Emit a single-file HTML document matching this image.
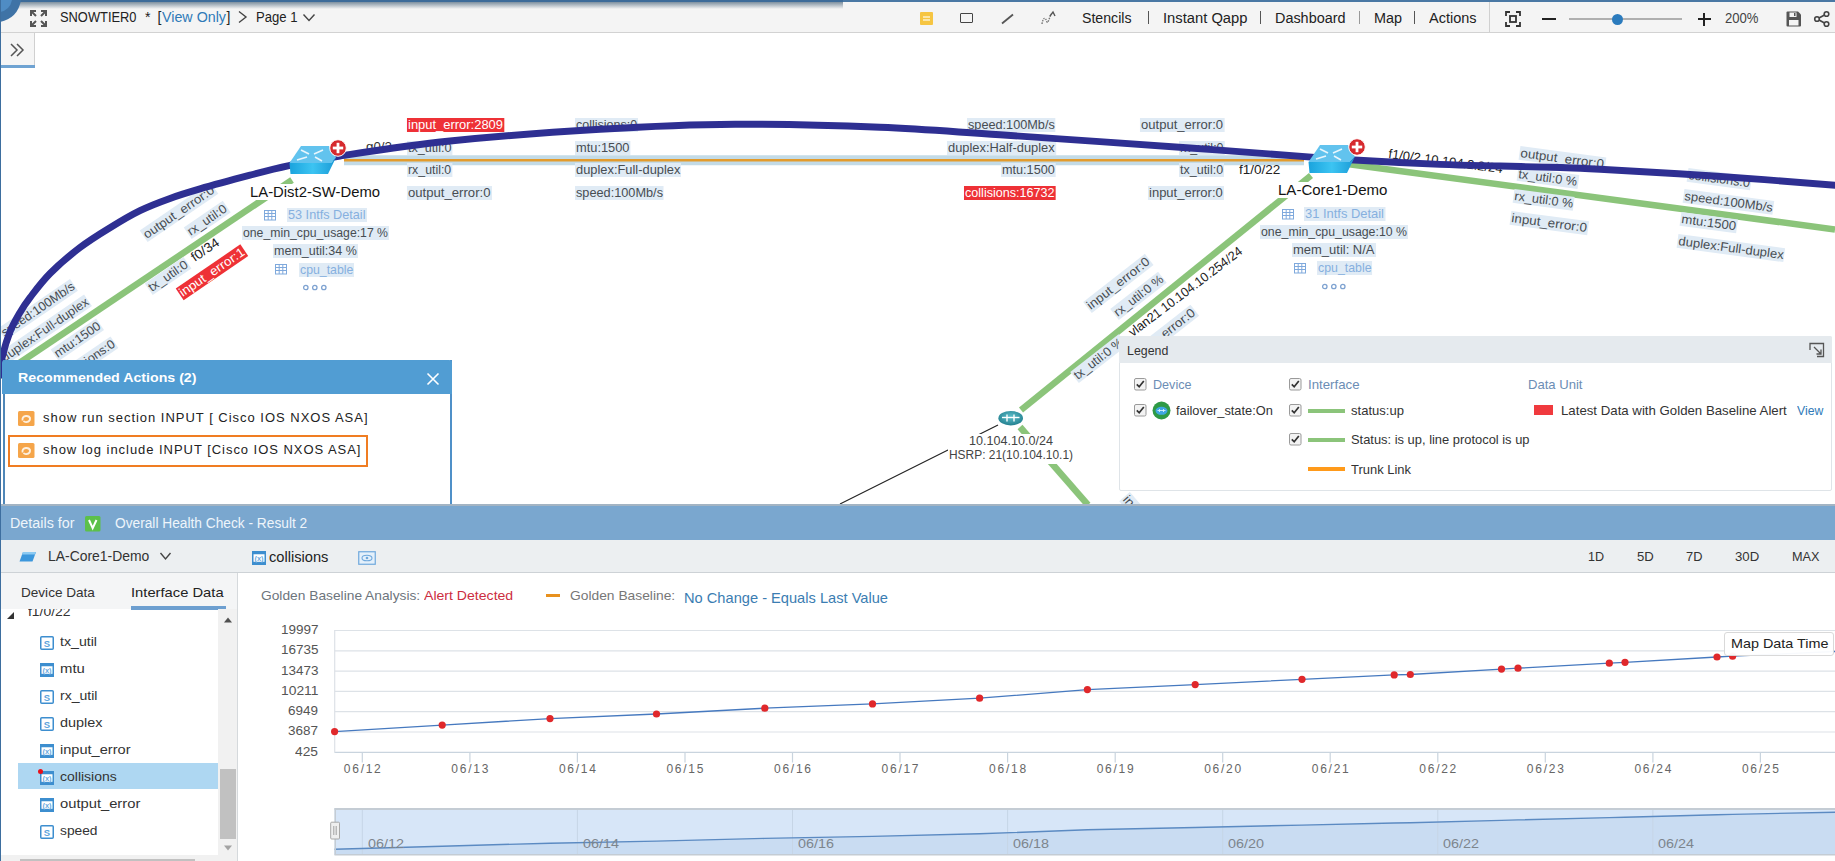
<!DOCTYPE html>
<html><head><meta charset="utf-8"><style>
html,body{margin:0;padding:0;width:1835px;height:861px;overflow:hidden;background:#fff;font-family:"Liberation Sans",sans-serif;position:relative}
.t{position:absolute;white-space:nowrap;z-index:5}
.a{position:absolute}
svg{position:absolute;left:0;top:0}
</style></head><body>
<div class="a" style="left:0;top:0;width:1835px;height:32px;background:#f4f4f4;border-bottom:1px solid #d2d2d2"></div>
<div class="a" style="left:843px;top:0;width:992px;height:1.7px;background:#4a78a4"></div>
<div class="a" style="left:0;top:0;width:843px;height:2.2px;background:#3d6b99"></div>
<div class="a" style="left:0;top:2.2px;width:843px;height:7px;background:linear-gradient(#7d8f9f,rgba(244,244,244,0))"></div>
<svg width="40" height="40" style="left:0;top:0"><path d="M0 0 H21 Q18 18 0 22 Z" fill="#3f73a6"/><path d="M0 0 H12 Q10 10 0 12 Z" fill="#4f8cc4"/></svg>
<div class="a" style="left:0;top:0;width:1px;height:861px;background:#3d6e9f;z-index:50"></div>
<svg width="20" height="20" style="left:29px;top:9px"><g stroke="#555" stroke-width="2" fill="none">
<path d="M2 7V2H7M2 2L7 7"/><path d="M17 7V2H12M17 2L12 7"/><path d="M2 12V17H7M2 17L7 12"/><path d="M17 12V17H12M17 17L12 12"/></g></svg>
<svg width="12" height="14" style="left:237px;top:10px"><path d="M2 1.5L9 7L2 12.5" stroke="#444" stroke-width="1.4" fill="none"/></svg>
<svg width="14" height="10" style="left:302px;top:13px"><path d="M1.5 1.5L7 7.5L12.5 1.5" stroke="#444" stroke-width="1.4" fill="none"/></svg>
<div class="a" style="left:920px;top:12px;width:13px;height:13px;background:#f6c542;border-radius:1px"></div>
<div class="a" style="left:923px;top:16px;width:7px;height:1.5px;background:#fbe6a8"></div><div class="a" style="left:923px;top:19px;width:7px;height:1.5px;background:#fbe6a8"></div>
<div class="a" style="left:960px;top:13px;width:11px;height:8px;border:1.6px solid #444;border-radius:1px"></div>
<svg width="16" height="14" style="left:1000px;top:12px"><path d="M2 11.5L13 2.5" stroke="#555" stroke-width="1.8"/></svg>
<svg width="18" height="16" style="left:1040px;top:10px"><path d="M2 14C3 8 5 6 7 12C8 14 10 6 11 4" stroke="#777" stroke-width="1.4" fill="none" stroke-dasharray="1.5 1"/><path d="M10 6L13 2L15 6" stroke="#555" stroke-width="1.4" fill="none"/></svg>
<div class="a" style="left:1148px;top:11px;width:1px;height:13px;background:#555"></div>
<div class="a" style="left:1260px;top:11px;width:1px;height:13px;background:#555"></div>
<div class="a" style="left:1359px;top:11px;width:1px;height:13px;background:#999"></div>
<div class="a" style="left:1414px;top:11px;width:1px;height:13px;background:#555"></div>
<div class="a" style="left:1489px;top:2px;width:1px;height:30px;background:#d0d0d0"></div>
<svg width="18" height="18" style="left:1504px;top:10px"><g stroke="#333" stroke-width="1.8" fill="none">
<path d="M2 6V2H6"/><path d="M12 2H16V6"/><path d="M2 12V16H6"/><path d="M12 16H16V12"/><rect x="6" y="6" width="6" height="6"/></g></svg>
<div class="a" style="left:1542px;top:18px;width:14px;height:2.2px;background:#222"></div>
<div class="a" style="left:1569px;top:18px;width:113px;height:2px;background:#b0b0b0"></div>
<div class="a" style="left:1611.5px;top:13.5px;width:11px;height:11px;border-radius:50%;background:#2b7bbd"></div>
<div class="a" style="left:1697.5px;top:18px;width:13.5px;height:2.4px;background:#222"></div><div class="a" style="left:1703px;top:12.5px;width:2.4px;height:13.5px;background:#222"></div>
<svg width="18" height="18" style="left:1785px;top:10px"><path d="M1.5 2.5Q1.5 1.5 2.5 1.5H13L16 4.5V15.5Q16 16.5 15 16.5H2.5Q1.5 16.5 1.5 15.5Z" fill="#555"/>
<rect x="4.5" y="2.5" width="7" height="4.5" fill="#f4f4f4"/><rect x="9" y="3" width="1.5" height="3" fill="#555"/><rect x="4" y="10" width="9.5" height="5.5" fill="#f4f4f4"/></svg>
<svg width="18" height="18" style="left:1813px;top:10px"><g stroke="#444" stroke-width="1.6" fill="none"><circle cx="13.5" cy="4" r="2.3"/><circle cx="4" cy="9" r="2.3"/><circle cx="13.5" cy="14" r="2.3"/><path d="M6 8L11.5 5M6 10L11.5 13"/></g></svg>
<div class="a" style="left:0;top:33px;width:34px;height:32px;background:#f5f5f5;border-right:1px solid #d0d0d0"></div>
<div class="a" style="left:0;top:65px;width:35px;height:3px;background:#6fa3d2"></div>
<svg width="20" height="16" style="left:9px;top:42px"><path d="M2 2L8 8L2 14M8 2L14 8L8 14" stroke="#555" stroke-width="1.5" fill="none"/></svg>
<svg width="1835" height="505" style="z-index:2">
<line x1="0" y1="376" x2="292" y2="180" stroke="#8bc47a" stroke-width="6.5"/>
<line x1="1311" y1="175.5" x2="1021" y2="410" stroke="#8bc47a" stroke-width="6.5"/>
<line x1="1020" y1="427" x2="1088" y2="505" stroke="#8bc47a" stroke-width="6.5"/>
<line x1="1340" y1="163" x2="1835" y2="229.5" stroke="#8bc47a" stroke-width="6.5"/>
<line x1="344" y1="160.2" x2="1304" y2="160.2" stroke="#c3dbe7" stroke-width="10"/>
<line x1="344" y1="160.2" x2="1304" y2="160.2" stroke="#e39b2c" stroke-width="2.5"/>
<line x1="998" y1="425" x2="840" y2="504" stroke="#222" stroke-width="1.2"/>
</svg>
<svg width="1835" height="505" style="z-index:8"><path d="M-1.0 378.0 C-0.5 374.7 0.2 365.7 2.0 358.0 C3.8 350.3 7.0 339.4 10.0 331.8 C13.0 324.2 16.7 318.2 20.0 312.5 C23.3 306.8 25.0 304.1 30.0 297.6 C35.0 291.1 41.7 281.9 50.0 273.5 C58.3 265.1 70.0 255.1 80.0 247.5 C90.0 239.9 100.0 233.8 110.0 227.7 C120.0 221.5 130.0 215.5 140.0 210.6 C150.0 205.7 160.0 202.0 170.0 198.4 C180.0 194.8 186.7 192.8 200.0 188.9 C213.3 185.0 235.2 179.1 250.0 175.2 C264.8 171.3 274.0 168.8 289.0 165.6 C304.0 162.4 313.2 160.1 340.0 156.0 C366.8 151.9 406.7 145.4 450.0 141.0 C493.3 136.6 552.5 132.1 600.0 129.3 C647.5 126.5 688.3 124.6 735.0 124.3 C781.7 124.0 835.8 125.5 880.0 127.3 C924.2 129.1 948.3 131.4 1000.0 134.8 C1051.7 138.2 1134.8 144.0 1190.0 148.0 C1245.2 152.0 1307.5 156.8 1331.0 158.6 M1331.0 158.6 C1334.2 158.8 1331.8 158.8 1350.0 159.8 C1368.2 160.8 1415.0 163.4 1440.0 164.4 C1465.0 165.4 1480.0 165.5 1500.0 166.0 C1520.0 166.5 1543.3 167.0 1560.0 167.5 C1576.7 168.0 1573.8 167.8 1600.0 169.2 C1626.2 170.6 1677.0 173.5 1717.0 176.2 C1757.0 178.9 1819.5 184.0 1840.0 185.6" stroke="#2e2f92" stroke-width="6.9" fill="none"/></svg>
<svg width="60" height="40" style="left:289.0px;top:145.0px;z-index:9">
<defs><linearGradient id="sf289" x1="0" y1="0" x2="1" y2="0"><stop offset="0" stop-color="#1aa3dd"/><stop offset="0.5" stop-color="#3cc4f2"/><stop offset="1" stop-color="#1a9ad6"/></linearGradient></defs>
<path d="M12 1H40L47 12.5L42 18H0.5Z" fill="#62c3ee"/>
<path d="M0.5 18H42L47 12.5L39 29H1.5Z" fill="url(#sf289)"/>
<g stroke="#e8f6fd" stroke-width="1.6" fill="none"><path d="M12 5L20 9"/><path d="M25 9L34 5"/><path d="M8 15L18 12"/><path d="M26 12L33 16"/></g>
</svg>
<svg width="20" height="20" style="left:328.0px;top:138.0px;z-index:10"><circle cx="10" cy="10" r="8.3" fill="#d62a2e" stroke="#fff" stroke-width="1"/>
<rect x="8.6" y="4.8" width="2.8" height="10.4" fill="#fff"/><rect x="4.8" y="8.6" width="10.4" height="2.8" fill="#fff"/></svg>
<svg width="60" height="40" style="left:1308.0px;top:144.0px;z-index:9">
<defs><linearGradient id="sf1308" x1="0" y1="0" x2="1" y2="0"><stop offset="0" stop-color="#1aa3dd"/><stop offset="0.5" stop-color="#3cc4f2"/><stop offset="1" stop-color="#1a9ad6"/></linearGradient></defs>
<path d="M12 1H40L47 12.5L42 18H0.5Z" fill="#62c3ee"/>
<path d="M0.5 18H42L47 12.5L39 29H1.5Z" fill="url(#sf1308)"/>
<g stroke="#e8f6fd" stroke-width="1.6" fill="none"><path d="M12 5L20 9"/><path d="M25 9L34 5"/><path d="M8 15L18 12"/><path d="M26 12L33 16"/></g>
</svg>
<svg width="20" height="20" style="left:1347.0px;top:137.0px;z-index:10"><circle cx="10" cy="10" r="8.3" fill="#d62a2e" stroke="#fff" stroke-width="1"/>
<rect x="8.6" y="4.8" width="2.8" height="10.4" fill="#fff"/><rect x="4.8" y="8.6" width="10.4" height="2.8" fill="#fff"/></svg>
<svg width="13" height="11" style="left:263.5px;top:210.0px;z-index:6"><g fill="none" stroke="#7fa9dc" stroke-width="1"><rect x="0.5" y="0.5" width="11" height="9.5"/><path d="M0.5 3.5H11.5M0.5 6.5H11.5M4.2 0.5V10M7.8 0.5V10"/></g></svg>
<svg width="13" height="11" style="left:275.0px;top:264.0px;z-index:6"><g fill="none" stroke="#7fa9dc" stroke-width="1"><rect x="0.5" y="0.5" width="11" height="9.5"/><path d="M0.5 3.5H11.5M0.5 6.5H11.5M4.2 0.5V10M7.8 0.5V10"/></g></svg>
<svg width="24" height="8" style="left:302.5px;top:284.0px;z-index:6"><g fill="none" stroke="#7fa3d1" stroke-width="1.3"><circle cx="2.8" cy="3.5" r="2.2"/><circle cx="11.8" cy="3.5" r="2.2"/><circle cx="20.8" cy="3.5" r="2.2"/></g></svg>
<svg width="13" height="11" style="left:1282.0px;top:208.5px;z-index:6"><g fill="none" stroke="#7fa9dc" stroke-width="1"><rect x="0.5" y="0.5" width="11" height="9.5"/><path d="M0.5 3.5H11.5M0.5 6.5H11.5M4.2 0.5V10M7.8 0.5V10"/></g></svg>
<svg width="13" height="11" style="left:1294.0px;top:262.5px;z-index:6"><g fill="none" stroke="#7fa9dc" stroke-width="1"><rect x="0.5" y="0.5" width="11" height="9.5"/><path d="M0.5 3.5H11.5M0.5 6.5H11.5M4.2 0.5V10M7.8 0.5V10"/></g></svg>
<svg width="24" height="8" style="left:1321.5px;top:282.5px;z-index:6"><g fill="none" stroke="#7fa3d1" stroke-width="1.3"><circle cx="2.8" cy="3.5" r="2.2"/><circle cx="11.8" cy="3.5" r="2.2"/><circle cx="20.8" cy="3.5" r="2.2"/></g></svg>
<svg width="30" height="20" style="left:996px;top:408px;z-index:9"><defs><radialGradient id="rg" cx="0.5" cy="0.4" r="0.6"><stop offset="0" stop-color="#5fc0cc"/><stop offset="1" stop-color="#23808f"/></radialGradient></defs>
<ellipse cx="14.7" cy="10.2" rx="12.3" ry="7.2" fill="url(#rg)"/>
<g stroke="#fff" stroke-width="1.4" fill="none"><path d="M6 9.5H23.5"/><path d="M11 6.5V13.5"/><path d="M18 6.5V13.5"/></g></svg>
<div class="a" style="left:948px;top:434px;width:126px;height:29.5px;background:#fff;z-index:6"></div>
<div class="a" style="left:2.5px;top:360px;width:449.5px;height:144px;background:#fff;z-index:20;box-sizing:border-box;border-left:2px solid #4f87b8;border-right:2px solid #4f90c8"></div>
<div class="a" style="left:2px;top:360px;width:450px;height:34px;background:#519dd3;z-index:21;border-radius:3px 3px 0 0"></div>
<svg width="16" height="16" style="left:425px;top:371px;z-index:22"><path d="M2.5 2.5L13.5 13.5M13.5 2.5L2.5 13.5" stroke="#fff" stroke-width="1.6"/></svg>
<svg width="17" height="16" style="left:18.0px;top:411.0px;z-index:22"><rect x="0" y="0" width="16.5" height="15" rx="1.5" fill="#f5a54a"/>
<path d="M4.5 9.5Q4 5.5 8 5Q11.5 4.8 12 7.5" stroke="#fdf0e0" stroke-width="1.8" fill="none"/><path d="M12 6.5Q12.5 10.5 8.5 11Q6.5 11.2 5.5 10" stroke="#fdf0e0" stroke-width="1.8" fill="none"/></svg>
<div class="a" style="left:8px;top:435px;width:360px;height:32px;box-sizing:border-box;border:2px solid #f07d22;z-index:22"></div>
<svg width="17" height="16" style="left:18.0px;top:442.5px;z-index:22"><rect x="0" y="0" width="16.5" height="15" rx="1.5" fill="#f5a54a"/>
<path d="M4.5 9.5Q4 5.5 8 5Q11.5 4.8 12 7.5" stroke="#fdf0e0" stroke-width="1.8" fill="none"/><path d="M12 6.5Q12.5 10.5 8.5 11Q6.5 11.2 5.5 10" stroke="#fdf0e0" stroke-width="1.8" fill="none"/></svg>
<div class="a" style="left:1119px;top:336px;width:713px;height:155px;background:#fff;border:1px solid #dfe4e8;box-sizing:border-box;z-index:20;border-radius:2px"></div>
<div class="a" style="left:1119px;top:336px;width:713px;height:27px;background:#e5eaee;z-index:21;border-radius:2px 2px 0 0"></div>
<svg width="18" height="18" style="left:1808px;top:341px;z-index:22"><g stroke="#555" stroke-width="1.3" fill="none"><path d="M2 9V2.5H15.5V15.5H9"/><path d="M6 6L13 13M13 8.5V13H8.5"/></g></svg>
<svg width="13" height="13" style="left:1133.5px;top:377.5px;z-index:22"><rect x="0.5" y="0.5" width="11.5" height="11.5" rx="1.5" fill="#f3f3f3" stroke="#9a9a9a"/><path d="M2.8 6.3L5.2 8.8L9.8 3" stroke="#333" stroke-width="1.7" fill="none"/></svg>
<svg width="13" height="13" style="left:1288.5px;top:377.5px;z-index:22"><rect x="0.5" y="0.5" width="11.5" height="11.5" rx="1.5" fill="#f3f3f3" stroke="#9a9a9a"/><path d="M2.8 6.3L5.2 8.8L9.8 3" stroke="#333" stroke-width="1.7" fill="none"/></svg>
<svg width="13" height="13" style="left:1133.5px;top:404.0px;z-index:22"><rect x="0.5" y="0.5" width="11.5" height="11.5" rx="1.5" fill="#f3f3f3" stroke="#9a9a9a"/><path d="M2.8 6.3L5.2 8.8L9.8 3" stroke="#333" stroke-width="1.7" fill="none"/></svg>
<svg width="20" height="20" style="left:1152px;top:400.5px;z-index:22"><circle cx="9.5" cy="9.5" r="9" fill="#2e9a45"/><ellipse cx="9.5" cy="9.8" rx="6" ry="4" fill="#3ea7e0"/><path d="M5.5 9.5H13.5M7.5 8V11M11.5 8V11" stroke="#d9f1fb" stroke-width="0.9"/></svg>
<svg width="13" height="13" style="left:1288.5px;top:404.0px;z-index:22"><rect x="0.5" y="0.5" width="11.5" height="11.5" rx="1.5" fill="#f3f3f3" stroke="#9a9a9a"/><path d="M2.8 6.3L5.2 8.8L9.8 3" stroke="#333" stroke-width="1.7" fill="none"/></svg>
<div class="a" style="left:1307.5px;top:408.5px;width:37.5px;height:4.5px;background:#8bc47a;z-index:22"></div>
<svg width="13" height="13" style="left:1288.5px;top:433.0px;z-index:22"><rect x="0.5" y="0.5" width="11.5" height="11.5" rx="1.5" fill="#f3f3f3" stroke="#9a9a9a"/><path d="M2.8 6.3L5.2 8.8L9.8 3" stroke="#333" stroke-width="1.7" fill="none"/></svg>
<div class="a" style="left:1307.5px;top:437.5px;width:37.5px;height:4.5px;background:#8bc47a;z-index:22"></div>
<div class="a" style="left:1307.5px;top:467px;width:37.5px;height:3.5px;background:#ff9a1a;z-index:22"></div>
<div class="a" style="left:1534px;top:405px;width:18.5px;height:10px;background:#f03a3e;z-index:22"></div>
<div class="a" style="left:0;top:504px;width:1835px;height:2px;background:#a3b4c3;z-index:30"></div>
<div class="a" style="left:0;top:506px;width:1835px;height:34px;background:#7aa7cf;z-index:30"></div>
<svg width="16" height="16" style="left:85px;top:516px;z-index:31"><rect x="0" y="0" width="15.5" height="15.5" rx="1.5" fill="#5cc04a"/><path d="M4 4L7.7 12.2L11.5 4" stroke="#fff" stroke-width="2" fill="none"/></svg>
<div class="a" style="left:0;top:540px;width:1835px;height:32px;background:#eceff1;border-bottom:1px solid #cdd2d6;z-index:30"></div>
<svg width="18" height="12" style="left:19px;top:550.5px;z-index:31"><path d="M4 1H17L13.5 10.5H0.5Z" fill="#3c97dc"/><path d="M4 1H17L16 3.5H3Z" fill="#8ccaf2"/></svg>
<svg width="14" height="10" style="left:159px;top:551px;z-index:31"><path d="M1.5 2L6.5 8L11.5 2" stroke="#444" stroke-width="1.4" fill="none"/></svg>
<svg width="15" height="15" style="left:252.0px;top:551.0px;z-index:31"><rect x="0.75" y="0.75" width="12.5" height="12.5" fill="#fff" stroke="#3d8ecf" stroke-width="1.5"/><rect x="0.75" y="0.75" width="12.5" height="2.5" fill="#3d8ecf"/><rect x="0.75" y="10.8" width="12.5" height="2.5" fill="#3d8ecf"/><text x="7" y="10" font-size="7.5" font-family="Liberation Sans" fill="#6aa9dd" text-anchor="middle" font-weight="bold">(x)</text></svg>
<svg width="19" height="15" style="left:357.5px;top:551px;z-index:31"><rect x="0.75" y="0.75" width="16.5" height="12.5" fill="#e4f0fb" stroke="#6fa8dc" stroke-width="1.2"/><ellipse cx="9" cy="7" rx="5" ry="2.8" fill="none" stroke="#6fa8dc" stroke-width="1.1"/><circle cx="9" cy="7" r="1.3" fill="#6fa8dc"/></svg>
<div class="a" style="left:0;top:573px;width:237px;height:36px;background:#f4f5f6;z-index:30"></div>
<div class="a" style="left:237px;top:573px;width:1px;height:288px;background:#d5d9dc;z-index:30"></div>
<div class="a" style="left:131px;top:606px;width:95px;height:3.5px;background:#6d9fd0;z-index:31"></div>
<div class="a" style="left:0;top:609px;width:237px;height:252px;background:#fff;z-index:29"></div>
<div class="a" style="left:0;top:609px;width:218px;height:20px;overflow:hidden;z-index:31"><svg width="10" height="10" style="left:5.5px;top:2px"><path d="M8 1V8H1Z" fill="#333"/></svg><span class="t" style="left:27.6px;top:-3.6px;font-size:13px;line-height:14px;color:#333;transform:scaleX(1.07);transform-origin:0 0">f1/0/22</span></div>
<div class="a" style="left:18px;top:763.2px;width:200.5px;height:26.3px;background:#aed7f2;z-index:30"></div>
<svg width="15" height="15" style="left:40.0px;top:636.0px;z-index:31"><rect x="0.75" y="0.75" width="12.5" height="12.5" rx="1" fill="#fff" stroke="#3d8ecf" stroke-width="1.5"/><text x="7" y="10.8" font-size="9.5" font-family="Liberation Sans" fill="#5ca3dc" text-anchor="middle" font-weight="bold">S</text></svg>
<svg width="15" height="15" style="left:40.0px;top:663.0px;z-index:31"><rect x="0.75" y="0.75" width="12.5" height="12.5" fill="#fff" stroke="#3d8ecf" stroke-width="1.5"/><rect x="0.75" y="0.75" width="12.5" height="2.5" fill="#3d8ecf"/><rect x="0.75" y="10.8" width="12.5" height="2.5" fill="#3d8ecf"/><text x="7" y="10" font-size="7.5" font-family="Liberation Sans" fill="#6aa9dd" text-anchor="middle" font-weight="bold">(x)</text></svg>
<svg width="15" height="15" style="left:40.0px;top:690.0px;z-index:31"><rect x="0.75" y="0.75" width="12.5" height="12.5" rx="1" fill="#fff" stroke="#3d8ecf" stroke-width="1.5"/><text x="7" y="10.8" font-size="9.5" font-family="Liberation Sans" fill="#5ca3dc" text-anchor="middle" font-weight="bold">S</text></svg>
<svg width="15" height="15" style="left:40.0px;top:717.0px;z-index:31"><rect x="0.75" y="0.75" width="12.5" height="12.5" rx="1" fill="#fff" stroke="#3d8ecf" stroke-width="1.5"/><text x="7" y="10.8" font-size="9.5" font-family="Liberation Sans" fill="#5ca3dc" text-anchor="middle" font-weight="bold">S</text></svg>
<svg width="15" height="15" style="left:40.0px;top:744.0px;z-index:31"><rect x="0.75" y="0.75" width="12.5" height="12.5" fill="#fff" stroke="#3d8ecf" stroke-width="1.5"/><rect x="0.75" y="0.75" width="12.5" height="2.5" fill="#3d8ecf"/><rect x="0.75" y="10.8" width="12.5" height="2.5" fill="#3d8ecf"/><text x="7" y="10" font-size="7.5" font-family="Liberation Sans" fill="#6aa9dd" text-anchor="middle" font-weight="bold">(x)</text></svg>
<svg width="15" height="15" style="left:40.0px;top:771.0px;z-index:31"><rect x="0.75" y="0.75" width="12.5" height="12.5" fill="#fff" stroke="#3d8ecf" stroke-width="1.5"/><rect x="0.75" y="0.75" width="12.5" height="2.5" fill="#3d8ecf"/><rect x="0.75" y="10.8" width="12.5" height="2.5" fill="#3d8ecf"/><text x="7" y="10" font-size="7.5" font-family="Liberation Sans" fill="#6aa9dd" text-anchor="middle" font-weight="bold">(x)</text></svg>
<svg width="15" height="15" style="left:40.0px;top:798.0px;z-index:31"><rect x="0.75" y="0.75" width="12.5" height="12.5" fill="#fff" stroke="#3d8ecf" stroke-width="1.5"/><rect x="0.75" y="0.75" width="12.5" height="2.5" fill="#3d8ecf"/><rect x="0.75" y="10.8" width="12.5" height="2.5" fill="#3d8ecf"/><text x="7" y="10" font-size="7.5" font-family="Liberation Sans" fill="#6aa9dd" text-anchor="middle" font-weight="bold">(x)</text></svg>
<svg width="15" height="15" style="left:40.0px;top:825.0px;z-index:31"><rect x="0.75" y="0.75" width="12.5" height="12.5" rx="1" fill="#fff" stroke="#3d8ecf" stroke-width="1.5"/><text x="7" y="10.8" font-size="9.5" font-family="Liberation Sans" fill="#5ca3dc" text-anchor="middle" font-weight="bold">S</text></svg>
<div class="a" style="left:38px;top:769px;width:5px;height:5px;border-radius:50%;background:#e8101a;z-index:33"></div>
<div class="a" style="left:218px;top:609px;width:19px;height:246px;background:#f1f1f1;z-index:31"></div>
<svg width="10" height="8" style="left:223px;top:616px;z-index:32"><path d="M1 6.5L5 1.5L9 6.5Z" fill="#505050"/></svg>
<div class="a" style="left:220px;top:768.8px;width:16px;height:70px;background:#c1c1c1;z-index:32"></div>
<svg width="10" height="8" style="left:223px;top:844px;z-index:32"><path d="M1 1.5L5 6.5L9 1.5Z" fill="#a3a3a3"/></svg>
<div class="a" style="left:0;top:855px;width:237px;height:6px;background:#f1f1f1;z-index:31"></div>
<div class="a" style="left:19.7px;top:858.5px;width:175px;height:3px;background:#c1c1c1;z-index:32"></div>
<div class="a" style="left:546px;top:593.5px;width:13.5px;height:3.5px;background:#e8911e;z-index:31"></div>
<svg width="1835" height="861" style="z-index:31">
<line x1="334.5" y1="630.5" x2="1835" y2="630.5" stroke="#dde2e7" stroke-width="1.2"/>
<line x1="334.5" y1="650.8" x2="1835" y2="650.8" stroke="#dde2e7" stroke-width="1.2"/>
<line x1="334.5" y1="671.1" x2="1835" y2="671.1" stroke="#dde2e7" stroke-width="1.2"/>
<line x1="334.5" y1="691.4" x2="1835" y2="691.4" stroke="#dde2e7" stroke-width="1.2"/>
<line x1="334.5" y1="711.7" x2="1835" y2="711.7" stroke="#dde2e7" stroke-width="1.2"/>
<line x1="334.5" y1="732.0" x2="1835" y2="732.0" stroke="#dde2e7" stroke-width="1.2"/>
<line x1="334.5" y1="752.3" x2="1835" y2="752.3" stroke="#c9d4de" stroke-width="1.3"/>
<line x1="334.7" y1="630" x2="334.7" y2="752.5" stroke="#dde2e7" stroke-width="1.2"/>
<line x1="362.3" y1="752.3" x2="362.3" y2="762.5" stroke="#c9d4de" stroke-width="1.2"/>
<line x1="469.9" y1="752.3" x2="469.9" y2="762.5" stroke="#c9d4de" stroke-width="1.2"/>
<line x1="577.4" y1="752.3" x2="577.4" y2="762.5" stroke="#c9d4de" stroke-width="1.2"/>
<line x1="685.0" y1="752.3" x2="685.0" y2="762.5" stroke="#c9d4de" stroke-width="1.2"/>
<line x1="792.5" y1="752.3" x2="792.5" y2="762.5" stroke="#c9d4de" stroke-width="1.2"/>
<line x1="900.0" y1="752.3" x2="900.0" y2="762.5" stroke="#c9d4de" stroke-width="1.2"/>
<line x1="1007.6" y1="752.3" x2="1007.6" y2="762.5" stroke="#c9d4de" stroke-width="1.2"/>
<line x1="1115.2" y1="752.3" x2="1115.2" y2="762.5" stroke="#c9d4de" stroke-width="1.2"/>
<line x1="1222.7" y1="752.3" x2="1222.7" y2="762.5" stroke="#c9d4de" stroke-width="1.2"/>
<line x1="1330.2" y1="752.3" x2="1330.2" y2="762.5" stroke="#c9d4de" stroke-width="1.2"/>
<line x1="1437.8" y1="752.3" x2="1437.8" y2="762.5" stroke="#c9d4de" stroke-width="1.2"/>
<line x1="1545.3" y1="752.3" x2="1545.3" y2="762.5" stroke="#c9d4de" stroke-width="1.2"/>
<line x1="1652.9" y1="752.3" x2="1652.9" y2="762.5" stroke="#c9d4de" stroke-width="1.2"/>
<line x1="1760.4" y1="752.3" x2="1760.4" y2="762.5" stroke="#c9d4de" stroke-width="1.2"/>
<polyline points="334.6,731.6 442.2,725.1 550.0,718.6 656.5,714.0 764.8,708.2 872.5,703.9 979.6,698.2 1087.4,689.6 1195.2,684.6 1302.0,679.3 1394.2,674.9 1410.3,674.5 1501.5,669.1 1518.0,668.2 1609.3,663.2 1625.0,662.3 1717.0,657.0 1732.6,656.2 1835.0,651.5" fill="none" stroke="#4679bf" stroke-width="1.3"/>
<circle cx="334.6" cy="731.6" r="3.6" fill="#e0282b"/>
<circle cx="442.2" cy="725.1" r="3.6" fill="#e0282b"/>
<circle cx="550.0" cy="718.6" r="3.6" fill="#e0282b"/>
<circle cx="656.5" cy="714.0" r="3.6" fill="#e0282b"/>
<circle cx="764.8" cy="708.2" r="3.6" fill="#e0282b"/>
<circle cx="872.5" cy="703.9" r="3.6" fill="#e0282b"/>
<circle cx="979.6" cy="698.2" r="3.6" fill="#e0282b"/>
<circle cx="1087.4" cy="689.6" r="3.6" fill="#e0282b"/>
<circle cx="1195.2" cy="684.6" r="3.6" fill="#e0282b"/>
<circle cx="1302.0" cy="679.3" r="3.6" fill="#e0282b"/>
<circle cx="1394.2" cy="674.9" r="3.6" fill="#e0282b"/>
<circle cx="1410.3" cy="674.5" r="3.6" fill="#e0282b"/>
<circle cx="1501.5" cy="669.1" r="3.6" fill="#e0282b"/>
<circle cx="1518.0" cy="668.2" r="3.6" fill="#e0282b"/>
<circle cx="1609.3" cy="663.2" r="3.6" fill="#e0282b"/>
<circle cx="1625.0" cy="662.3" r="3.6" fill="#e0282b"/>
<circle cx="1717.0" cy="657.0" r="3.6" fill="#e0282b"/>
<circle cx="1732.6" cy="656.2" r="3.6" fill="#e0282b"/>
<rect x="334.5" y="809" width="1501" height="45" fill="#d7e6f8"/>
<polygon points="334.6,849.2 442.2,846.2 550.0,843.2 656.5,841.1 764.8,838.4 872.5,836.4 979.6,833.8 1087.4,829.8 1195.2,827.5 1302.0,825.1 1394.2,823.0 1410.3,822.8 1501.5,820.4 1518.0,819.9 1609.3,817.6 1625.0,817.2 1717.0,814.8 1732.6,814.4 1835.0,812.2 1835,854 334.5,854" fill="#c9dcf2"/>
<line x1="362.3" y1="809" x2="362.3" y2="854" stroke="#c6d5e6" stroke-width="1"/>
<line x1="577.4" y1="809" x2="577.4" y2="854" stroke="#c6d5e6" stroke-width="1"/>
<line x1="792.5" y1="809" x2="792.5" y2="854" stroke="#c6d5e6" stroke-width="1"/>
<line x1="1007.6" y1="809" x2="1007.6" y2="854" stroke="#c6d5e6" stroke-width="1"/>
<line x1="1222.7" y1="809" x2="1222.7" y2="854" stroke="#c6d5e6" stroke-width="1"/>
<line x1="1437.8" y1="809" x2="1437.8" y2="854" stroke="#c6d5e6" stroke-width="1"/>
<line x1="1652.9" y1="809" x2="1652.9" y2="854" stroke="#c6d5e6" stroke-width="1"/>
<polyline points="334.6,849.2 442.2,846.2 550.0,843.2 656.5,841.1 764.8,838.4 872.5,836.4 979.6,833.8 1087.4,829.8 1195.2,827.5 1302.0,825.1 1394.2,823.0 1410.3,822.8 1501.5,820.4 1518.0,819.9 1609.3,817.6 1625.0,817.2 1717.0,814.8 1732.6,814.4 1835.0,812.2" fill="none" stroke="#5b8ac2" stroke-width="1.4"/>
<rect x="334.5" y="808" width="1501" height="2" fill="#c4ccd4"/>
<rect x="334.5" y="854" width="1501" height="1.5" fill="#c4ccd4"/>
<rect x="334.5" y="808" width="1.5" height="47" fill="#c4ccd4"/>
<rect x="330.7" y="822.2" width="8.8" height="16.8" rx="1" fill="#efefef" stroke="#a8a8a8" stroke-width="1"/><path d="M333.8 826V835M336.2 826V835" stroke="#999" stroke-width="0.9"/>
</svg>
<div class="a" style="left:1724px;top:632.3px;width:110px;height:23.8px;box-sizing:border-box;background:rgba(255,255,255,0.96);border:1px solid #d9d9d9;border-radius:3px;z-index:33"></div>
<span class="t" style="left:59.50px;top:10.45px;font-size:14.00px;line-height:15px;color:#222;transform:scaleX(0.9191);transform-origin:0.0px 12.4px">SNOWTIER0</span>
<span class="t" style="left:145.00px;top:10.45px;font-size:14.00px;line-height:15px;color:#222;transform:scaleX(1.0086);transform-origin:0.0px 12.4px">*</span>
<span class="t" style="left:157.50px;top:10.45px;font-size:14.00px;line-height:15px;color:#222">[</span>
<span class="t" style="left:162.00px;top:10.45px;font-size:14.00px;line-height:15px;color:#2f7ab8;transform:scaleX(1.0194);transform-origin:0.0px 12.4px">View Only</span>
<span class="t" style="left:226.50px;top:10.45px;font-size:14.00px;line-height:15px;color:#222">]</span>
<span class="t" style="left:256.00px;top:10.45px;font-size:14.00px;line-height:15px;color:#222;transform:scaleX(0.9352);transform-origin:0.0px 12.4px">Page 1</span>
<span class="t" style="left:1082.00px;top:10.55px;font-size:14.00px;line-height:15px;color:#222;transform:scaleX(1.0096);transform-origin:0.0px 12.4px">Stencils</span>
<span class="t" style="left:1163.00px;top:10.55px;font-size:14.00px;line-height:15px;color:#222;transform:scaleX(1.0540);transform-origin:0.0px 12.4px">Instant Qapp</span>
<span class="t" style="left:1275.00px;top:10.55px;font-size:14.00px;line-height:15px;color:#222;transform:scaleX(1.0292);transform-origin:0.0px 12.4px">Dashboard</span>
<span class="t" style="left:1373.50px;top:10.55px;font-size:14.00px;line-height:15px;color:#222;transform:scaleX(1.0281);transform-origin:0.0px 12.4px">Map</span>
<span class="t" style="left:1429.00px;top:10.55px;font-size:14.00px;line-height:15px;color:#222;transform:scaleX(1.0344);transform-origin:0.0px 12.4px">Actions</span>
<span class="t" style="left:1724.50px;top:11.05px;font-size:14.00px;line-height:15px;color:#444;transform:scaleX(0.9354);transform-origin:0.0px 12.4px">200%</span>
<span class="t" style="left:406.50px;top:118.27px;font-size:12.50px;line-height:14px;color:#fff;background:#ee3136;padding:0 1.0px;transform:scaleX(1.0356);transform-origin:1.0px 11.3px">input_error:2809</span>
<span class="t" style="left:406.50px;top:140.67px;font-size:12.50px;line-height:14px;color:#474d52;background:#e0ebf5;padding:0 1.0px;transform:scaleX(1.0094);transform-origin:1.0px 11.3px">tx_util:0</span>
<span class="t" style="left:406.50px;top:163.47px;font-size:12.50px;line-height:14px;color:#474d52;background:#e0ebf5;padding:0 1.0px;transform:scaleX(0.9867);transform-origin:1.0px 11.3px">rx_util:0</span>
<span class="t" style="left:406.50px;top:185.67px;font-size:12.50px;line-height:14px;color:#474d52;background:#e0ebf5;padding:0 1.0px;transform:scaleX(1.0505);transform-origin:1.0px 11.3px">output_error:0</span>
<span class="t" style="left:575.00px;top:117.87px;font-size:12.50px;line-height:14px;color:#474d52;background:#e0ebf5;padding:0 1.0px">collisions:0</span>
<span class="t" style="left:575.00px;top:140.67px;font-size:12.50px;line-height:14px;color:#474d52;background:#e0ebf5;padding:0 1.0px;transform:scaleX(1.0264);transform-origin:1.0px 11.3px">mtu:1500</span>
<span class="t" style="left:575.00px;top:163.47px;font-size:12.50px;line-height:14px;color:#474d52;background:#e0ebf5;padding:0 1.0px;transform:scaleX(1.0290);transform-origin:1.0px 11.3px">duplex:Full-duplex</span>
<span class="t" style="left:575.00px;top:185.67px;font-size:12.50px;line-height:14px;color:#474d52;background:#e0ebf5;padding:0 1.0px;transform:scaleX(1.0177);transform-origin:1.0px 11.3px">speed:100Mb/s</span>
<span class="t" style="left:966.50px;top:117.87px;font-size:12.50px;line-height:14px;color:#474d52;background:#e0ebf5;padding:0 1.0px;transform:scaleX(1.0154);transform-origin:1.0px 11.3px">speed:100Mb/s</span>
<span class="t" style="left:946.60px;top:140.67px;font-size:12.50px;line-height:14px;color:#474d52;background:#e0ebf5;padding:0 1.0px;transform:scaleX(1.0305);transform-origin:1.0px 11.3px">duplex:Half-duplex</span>
<span class="t" style="left:1000.50px;top:163.47px;font-size:12.50px;line-height:14px;color:#474d52;background:#e0ebf5;padding:0 1.0px;transform:scaleX(1.0129);transform-origin:1.0px 11.3px">mtu:1500</span>
<span class="t" style="left:964.00px;top:185.67px;font-size:12.50px;line-height:14px;color:#fff;background:#ee3136;padding:0 1.0px;transform:scaleX(1.0073);transform-origin:1.0px 11.3px">collisions:16732</span>
<span class="t" style="left:1139.90px;top:117.87px;font-size:12.50px;line-height:14px;color:#474d52;background:#e0ebf5;padding:0 1.0px;transform:scaleX(1.0454);transform-origin:1.0px 11.3px">output_error:0</span>
<span class="t" style="left:1178.50px;top:140.67px;font-size:12.50px;line-height:14px;color:#474d52;background:#e0ebf5;padding:0 1.0px;transform:scaleX(0.9936);transform-origin:1.0px 11.3px">rx_util:0</span>
<span class="t" style="left:1179.00px;top:163.47px;font-size:12.50px;line-height:14px;color:#474d52;background:#e0ebf5;padding:0 1.0px">tx_util:0</span>
<span class="t" style="left:1148.20px;top:185.67px;font-size:12.50px;line-height:14px;color:#474d52;background:#e0ebf5;padding:0 1.0px;transform:scaleX(1.0413);transform-origin:1.0px 11.3px">input_error:0</span>
<span class="t" style="left:1239.20px;top:162.50px;font-size:13.00px;line-height:14px;color:#222;transform:scaleX(1.0411);transform-origin:0.0px 11.5px">f1/0/22</span>
<span class="t" style="left:366.00px;top:139.50px;font-size:13.00px;line-height:14px;color:#333;transform:scaleX(1.0272);transform-origin:0.0px 11.5px;z-index:4">g0/2</span>
<span class="t" style="left:146.00px;top:227.67px;font-size:12.50px;line-height:14px;color:#474d52;background:#e0ebf5;padding:0 1.0px;transform:rotate(-34.40deg) scaleX(1.0569);transform-origin:1.0px 11.3px">output_error:0</span>
<span class="t" style="left:190.00px;top:224.67px;font-size:12.50px;line-height:14px;color:#474d52;background:#e0ebf5;padding:0 1.0px;transform:rotate(-34.40deg) scaleX(1.0278);transform-origin:1.0px 11.3px">rx_util:0</span>
<span class="t" style="left:151.00px;top:280.67px;font-size:12.50px;line-height:14px;color:#474d52;background:#e0ebf5;padding:0 1.0px;transform:rotate(-34.40deg) scaleX(1.0442);transform-origin:1.0px 11.3px">tx_util:0</span>
<span class="t" style="left:195.00px;top:250.50px;font-size:13.00px;line-height:14px;color:#222;transform:rotate(-34.40deg) scaleX(1.0719);transform-origin:0.0px 11.5px">f0/34</span>
<span class="t" style="left:182.00px;top:286.17px;font-size:12.50px;line-height:14px;color:#fff;background:#ee3136;padding:0 1.0px;transform:rotate(-34.40deg) scaleX(1.0723);transform-origin:1.0px 11.3px">input_error:1</span>
<span class="t" style="left:4.00px;top:325.67px;font-size:12.50px;line-height:14px;color:#474d52;background:#e0ebf5;padding:0 1.0px;transform:rotate(-34.40deg) scaleX(1.0060);transform-origin:1.0px 11.3px">speed:100Mb/s</span>
<span class="t" style="left:4.00px;top:350.67px;font-size:12.50px;line-height:14px;color:#474d52;background:#e0ebf5;padding:0 1.0px;transform:rotate(-34.40deg) scaleX(1.0152);transform-origin:1.0px 11.3px">duplex:Full-duplex</span>
<span class="t" style="left:57.00px;top:346.67px;font-size:12.50px;line-height:14px;color:#474d52;background:#e0ebf5;padding:0 1.0px;transform:rotate(-34.40deg) scaleX(1.0168);transform-origin:1.0px 11.3px">mtu:1500</span>
<span class="t" style="left:64.00px;top:369.67px;font-size:12.50px;line-height:14px;color:#474d52;background:#e0ebf5;padding:0 1.0px;transform:rotate(-34.40deg) scaleX(1.0141);transform-origin:1.0px 11.3px">collisions:0</span>
<span class="t" style="left:1519.00px;top:146.17px;font-size:12.50px;line-height:14px;color:#474d52;background:#e0ebf5;padding:0 1.0px;transform:rotate(7.60deg) scaleX(1.0696);transform-origin:1.0px 11.3px">output_error:0</span>
<span class="t" style="left:1517.00px;top:167.17px;font-size:12.50px;line-height:14px;color:#474d52;background:#e0ebf5;padding:0 1.0px;transform:rotate(7.60deg) scaleX(1.0230);transform-origin:1.0px 11.3px">tx_util:0 %</span>
<span class="t" style="left:1513.00px;top:189.17px;font-size:12.50px;line-height:14px;color:#474d52;background:#e0ebf5;padding:0 1.0px;transform:rotate(7.60deg) scaleX(1.0110);transform-origin:1.0px 11.3px">rx_util:0 %</span>
<span class="t" style="left:1510.00px;top:211.17px;font-size:12.50px;line-height:14px;color:#474d52;background:#e0ebf5;padding:0 1.0px;transform:rotate(7.60deg) scaleX(1.0723);transform-origin:1.0px 11.3px">input_error:0</span>
<span class="t" style="left:1687.00px;top:168.17px;font-size:12.50px;line-height:14px;color:#474d52;background:#e0ebf5;padding:0 1.0px;transform:rotate(7.60deg) scaleX(1.0141);transform-origin:1.0px 11.3px">collisions:0</span>
<span class="t" style="left:1683.00px;top:189.17px;font-size:12.50px;line-height:14px;color:#474d52;background:#e0ebf5;padding:0 1.0px;transform:rotate(7.60deg) scaleX(1.0411);transform-origin:1.0px 11.3px">speed:100Mb/s</span>
<span class="t" style="left:1680.00px;top:212.17px;font-size:12.50px;line-height:14px;color:#474d52;background:#e0ebf5;padding:0 1.0px;transform:rotate(7.60deg) scaleX(1.0552);transform-origin:1.0px 11.3px">mtu:1500</span>
<span class="t" style="left:1677.00px;top:234.17px;font-size:12.50px;line-height:14px;color:#474d52;background:#e0ebf5;padding:0 1.0px;transform:rotate(7.60deg) scaleX(1.0448);transform-origin:1.0px 11.3px">duplex:Full-duplex</span>
<span class="t" style="left:1388.00px;top:146.50px;font-size:13.00px;line-height:14px;color:#222;transform:rotate(7.60deg) scaleX(0.9943);transform-origin:0.0px 11.5px;z-index:4">f1/0/2 10.104.2.2/24</span>
<span class="t" style="left:1090.00px;top:299.17px;font-size:12.50px;line-height:14px;color:#474d52;background:#e0ebf5;padding:0 1.0px;transform:rotate(-38.00deg) scaleX(1.0723);transform-origin:1.0px 11.3px">input_error:0</span>
<span class="t" style="left:1117.00px;top:305.67px;font-size:12.50px;line-height:14px;color:#474d52;background:#e0ebf5;padding:0 1.0px;transform:rotate(-38.00deg) scaleX(1.0110);transform-origin:1.0px 11.3px">rx_util:0 %</span>
<span class="t" style="left:1132.50px;top:325.50px;font-size:13.00px;line-height:14px;color:#222;transform:rotate(-37.20deg) scaleX(0.9711);transform-origin:0.0px 11.5px">vlan21 10.104.10.254/24</span>
<span class="t" style="left:1077.00px;top:368.67px;font-size:12.50px;line-height:14px;color:#474d52;background:#e0ebf5;padding:0 1.0px;transform:rotate(-38.00deg) scaleX(1.0230);transform-origin:1.0px 11.3px">tx_util:0 %</span>
<span class="t" style="left:1129.00px;top:354.67px;font-size:12.50px;line-height:14px;color:#474d52;background:#e0ebf5;padding:0 1.0px;transform:rotate(-38.00deg) scaleX(1.0696);transform-origin:1.0px 11.3px">output_error:0</span>
<span class="t" style="left:1120.50px;top:488.67px;font-size:12.50px;line-height:14px;color:#474d52;background:#e0ebf5;padding:0 1.0px;transform:rotate(49.00deg) scaleX(1.0723);transform-origin:1.0px 11.3px">input_error:0</span>
<span class="t" style="left:249.50px;top:183.68px;font-size:14.50px;line-height:16px;color:#141414;background:#fff;transform:scaleX(1.0234);transform-origin:0.0px 13.0px;z-index:6">LA-Dist2-SW-Demo</span>
<span class="t" style="left:286.70px;top:208.10px;font-size:13.00px;line-height:14px;color:#86b0df;background:#e0ebf5;padding:0 1.0px;transform:scaleX(0.9748);transform-origin:1.0px 11.5px">53 Intfs Detail</span>
<span class="t" style="left:242.00px;top:226.27px;font-size:12.50px;line-height:14px;color:#474d52;background:#e0ebf5;padding:0 1.0px;transform:scaleX(0.9795);transform-origin:1.0px 11.3px">one_min_cpu_usage:17 %</span>
<span class="t" style="left:273.10px;top:244.27px;font-size:12.50px;line-height:14px;color:#474d52;background:#e0ebf5;padding:0 1.0px">mem_util:34 %</span>
<span class="t" style="left:298.80px;top:262.60px;font-size:13.00px;line-height:14px;color:#86b0df;background:#e0ebf5;padding:0 1.0px;transform:scaleX(0.9470);transform-origin:1.0px 11.5px">cpu_table</span>
<span class="t" style="left:1278.00px;top:182.18px;font-size:14.50px;line-height:16px;color:#141414;background:#fff;transform:scaleX(1.0371);transform-origin:0.0px 13.0px;z-index:6">LA-Core1-Demo</span>
<span class="t" style="left:1304.00px;top:206.60px;font-size:13.00px;line-height:14px;color:#86b0df;background:#e0ebf5;padding:0 1.0px;transform:scaleX(0.9937);transform-origin:1.0px 11.5px">31 Intfs Detail</span>
<span class="t" style="left:1260.00px;top:224.77px;font-size:12.50px;line-height:14px;color:#474d52;background:#e0ebf5;padding:0 1.0px;transform:scaleX(0.9863);transform-origin:1.0px 11.3px">one_min_cpu_usage:10 %</span>
<span class="t" style="left:1292.00px;top:242.77px;font-size:12.50px;line-height:14px;color:#474d52;background:#e0ebf5;padding:0 1.0px;transform:scaleX(1.0382);transform-origin:1.0px 11.3px">mem_util: N/A</span>
<span class="t" style="left:1317.00px;top:261.10px;font-size:13.00px;line-height:14px;color:#86b0df;background:#e0ebf5;padding:0 1.0px;transform:scaleX(0.9487);transform-origin:1.0px 11.5px">cpu_table</span>
<span class="t" style="left:969.00px;top:434.94px;font-size:12.00px;line-height:13px;color:#444;background:#fff;transform:scaleX(1.0490);transform-origin:0.0px 10.7px;z-index:6">10.104.10.0/24</span>
<span class="t" style="left:949.00px;top:449.14px;font-size:12.00px;line-height:13px;color:#444;background:#fff;transform:scaleX(0.9940);transform-origin:0.0px 10.7px;z-index:6">HSRP: 21(10.104.10.1)</span>
<span class="t" style="left:18.00px;top:371.00px;font-size:13.00px;line-height:14px;color:#fff;font-weight:bold;transform:scaleX(1.0917);transform-origin:0.0px 11.5px;z-index:22">Recommended Actions (2)</span>
<span class="t" style="left:43.00px;top:410.90px;font-size:13.00px;line-height:14px;color:#222;letter-spacing:0.983px;z-index:22">show run section INPUT [ Cisco IOS NXOS ASA]</span>
<span class="t" style="left:43.00px;top:442.80px;font-size:13.00px;line-height:14px;color:#222;letter-spacing:0.959px;z-index:23">show log include INPUT [Cisco IOS NXOS ASA]</span>
<span class="t" style="left:1126.50px;top:343.82px;font-size:13.50px;line-height:14px;color:#333;transform:scaleX(0.9165);transform-origin:0.0px 11.7px;z-index:22">Legend</span>
<span class="t" style="left:1152.70px;top:377.80px;font-size:13.00px;line-height:14px;color:#6c8db5;transform:scaleX(0.9686);transform-origin:0.0px 11.5px;z-index:22">Device</span>
<span class="t" style="left:1307.50px;top:377.80px;font-size:13.00px;line-height:14px;color:#6c8db5;transform:scaleX(1.0179);transform-origin:0.0px 11.5px;z-index:22">Interface</span>
<span class="t" style="left:1527.60px;top:377.80px;font-size:13.00px;line-height:14px;color:#6c8db5;transform:scaleX(1.0055);transform-origin:0.0px 11.5px;z-index:22">Data Unit</span>
<span class="t" style="left:1176.40px;top:403.50px;font-size:13.00px;line-height:14px;color:#333;transform:scaleX(0.9849);transform-origin:0.0px 11.5px;z-index:22">failover_state:On</span>
<span class="t" style="left:1351.00px;top:403.50px;font-size:13.00px;line-height:14px;color:#333;transform:scaleX(1.0044);transform-origin:0.0px 11.5px;z-index:22">status:up</span>
<span class="t" style="left:1351.00px;top:433.00px;font-size:13.00px;line-height:14px;color:#333;transform:scaleX(0.9920);transform-origin:0.0px 11.5px;z-index:22">Status: is up, line protocol is up</span>
<span class="t" style="left:1351.00px;top:462.50px;font-size:13.00px;line-height:14px;color:#333;transform:scaleX(0.9964);transform-origin:0.0px 11.5px;z-index:22">Trunk Link</span>
<span class="t" style="left:1561.00px;top:403.50px;font-size:13.00px;line-height:14px;color:#333;transform:scaleX(1.0178);transform-origin:0.0px 11.5px;z-index:22">Latest Data with Golden Baseline Alert</span>
<span class="t" style="left:1796.70px;top:403.50px;font-size:13.00px;line-height:14px;color:#2f7ab8;transform:scaleX(0.9409);transform-origin:0.0px 11.5px;z-index:22">View</span>
<span class="t" style="left:10.00px;top:515.65px;font-size:14.00px;line-height:15px;color:#eef5fb;transform:scaleX(1.0233);transform-origin:0.0px 12.4px;z-index:31">Details for</span>
<span class="t" style="left:114.80px;top:515.65px;font-size:14.00px;line-height:15px;color:#eef5fb;transform:scaleX(0.9802);transform-origin:0.0px 12.4px;z-index:31">Overall Health Check - Result 2</span>
<span class="t" style="left:48.40px;top:548.95px;font-size:14.00px;line-height:15px;color:#333;transform:scaleX(0.9937);transform-origin:0.0px 12.4px;z-index:31">LA-Core1-Demo</span>
<span class="t" style="left:269.00px;top:550.25px;font-size:14.00px;line-height:15px;color:#222;transform:scaleX(1.0455);transform-origin:0.0px 12.4px;z-index:31">collisions</span>
<span class="t" style="left:1588.30px;top:550.40px;font-size:13.00px;line-height:14px;color:#333;transform:scaleX(0.9684);transform-origin:0.0px 11.5px;z-index:31">1D</span>
<span class="t" style="left:1637.00px;top:550.40px;font-size:13.00px;line-height:14px;color:#333;transform:scaleX(1.0105);transform-origin:0.0px 11.5px;z-index:31">5D</span>
<span class="t" style="left:1685.80px;top:550.40px;font-size:13.00px;line-height:14px;color:#333;transform:scaleX(0.9865);transform-origin:0.0px 11.5px;z-index:31">7D</span>
<span class="t" style="left:1735.00px;top:550.40px;font-size:13.00px;line-height:14px;color:#333;transform:scaleX(1.0143);transform-origin:0.0px 11.5px;z-index:31">30D</span>
<span class="t" style="left:1791.70px;top:550.40px;font-size:13.00px;line-height:14px;color:#333;transform:scaleX(0.9762);transform-origin:0.0px 11.5px;z-index:31">MAX</span>
<span class="t" style="left:20.60px;top:585.62px;font-size:13.50px;line-height:14px;color:#333;transform:scaleX(1.0048);transform-origin:0.0px 11.7px;z-index:31">Device Data</span>
<span class="t" style="left:131.00px;top:585.62px;font-size:13.50px;line-height:14px;color:#222;transform:scaleX(1.0920);transform-origin:0.0px 11.7px;z-index:31">Interface Data</span>
<span class="t" style="left:59.50px;top:635.00px;font-size:13.00px;line-height:14px;color:#333;transform:scaleX(1.0892);transform-origin:0.0px 11.5px;z-index:31">tx_util</span>
<span class="t" style="left:59.50px;top:662.00px;font-size:13.00px;line-height:14px;color:#333;transform:scaleX(1.1443);transform-origin:0.0px 11.5px;z-index:31">mtu</span>
<span class="t" style="left:59.50px;top:689.00px;font-size:13.00px;line-height:14px;color:#333;transform:scaleX(1.0811);transform-origin:0.0px 11.5px;z-index:31">rx_util</span>
<span class="t" style="left:59.50px;top:716.00px;font-size:13.00px;line-height:14px;color:#333;transform:scaleX(1.1093);transform-origin:0.0px 11.5px;z-index:31">duplex</span>
<span class="t" style="left:59.50px;top:743.00px;font-size:13.00px;line-height:14px;color:#333;transform:scaleX(1.1213);transform-origin:0.0px 11.5px;z-index:31">input_error</span>
<span class="t" style="left:59.50px;top:770.00px;font-size:13.00px;line-height:14px;color:#333;transform:scaleX(1.0768);transform-origin:0.0px 11.5px;z-index:31">collisions</span>
<span class="t" style="left:59.50px;top:797.00px;font-size:13.00px;line-height:14px;color:#333;transform:scaleX(1.1337);transform-origin:0.0px 11.5px;z-index:31">output_error</span>
<span class="t" style="left:59.50px;top:824.00px;font-size:13.00px;line-height:14px;color:#333;transform:scaleX(1.0587);transform-origin:0.0px 11.5px;z-index:31">speed</span>
<span class="t" style="left:261.30px;top:589.12px;font-size:13.50px;line-height:14px;color:#6d757d;transform:scaleX(1.0199);transform-origin:0.0px 11.7px;z-index:31">Golden Baseline Analysis:</span>
<span class="t" style="left:424.30px;top:589.12px;font-size:13.50px;line-height:14px;color:#cc2d3f;transform:scaleX(1.0427);transform-origin:0.0px 11.7px;z-index:31">Alert Detected</span>
<span class="t" style="left:569.80px;top:588.92px;font-size:13.50px;line-height:14px;color:#777;transform:scaleX(1.0231);transform-origin:0.0px 11.7px;z-index:31">Golden Baseline:</span>
<span class="t" style="left:684.20px;top:589.98px;font-size:14.50px;line-height:16px;color:#3b7db2;transform:scaleX(1.0096);transform-origin:0.0px 13.0px;z-index:31">No Change - Equals Last Value</span>
<span class="t" style="left:280.50px;top:622.97px;font-size:12.50px;line-height:14px;color:#555;transform:scaleX(1.0787);transform-origin:0.0px 11.3px;z-index:32">19997</span>
<span class="t" style="left:280.50px;top:643.27px;font-size:12.50px;line-height:14px;color:#555;transform:scaleX(1.0787);transform-origin:0.0px 11.3px;z-index:32">16735</span>
<span class="t" style="left:280.50px;top:663.57px;font-size:12.50px;line-height:14px;color:#555;transform:scaleX(1.0787);transform-origin:0.0px 11.3px;z-index:32">13473</span>
<span class="t" style="left:280.50px;top:683.87px;font-size:12.50px;line-height:14px;color:#555;transform:scaleX(1.1080);transform-origin:0.0px 11.3px;z-index:32">10211</span>
<span class="t" style="left:288.00px;top:704.17px;font-size:12.50px;line-height:14px;color:#555;transform:scaleX(1.0787);transform-origin:0.0px 11.3px;z-index:32">6949</span>
<span class="t" style="left:288.00px;top:724.47px;font-size:12.50px;line-height:14px;color:#555;transform:scaleX(1.0787);transform-origin:0.0px 11.3px;z-index:32">3687</span>
<span class="t" style="left:295.00px;top:744.77px;font-size:12.50px;line-height:14px;color:#555;transform:scaleX(1.1026);transform-origin:0.0px 11.3px;z-index:32">425</span>
<span class="t" style="left:343.80px;top:763.04px;font-size:12.00px;line-height:13px;color:#666;letter-spacing:1.742px;z-index:32">06/12</span>
<span class="t" style="left:451.35px;top:763.04px;font-size:12.00px;line-height:13px;color:#666;letter-spacing:1.742px;z-index:32">06/13</span>
<span class="t" style="left:558.90px;top:763.04px;font-size:12.00px;line-height:13px;color:#666;letter-spacing:1.742px;z-index:32">06/14</span>
<span class="t" style="left:666.45px;top:763.04px;font-size:12.00px;line-height:13px;color:#666;letter-spacing:1.742px;z-index:32">06/15</span>
<span class="t" style="left:774.00px;top:763.04px;font-size:12.00px;line-height:13px;color:#666;letter-spacing:1.742px;z-index:32">06/16</span>
<span class="t" style="left:881.55px;top:763.04px;font-size:12.00px;line-height:13px;color:#666;letter-spacing:1.742px;z-index:32">06/17</span>
<span class="t" style="left:989.10px;top:763.04px;font-size:12.00px;line-height:13px;color:#666;letter-spacing:1.742px;z-index:32">06/18</span>
<span class="t" style="left:1096.65px;top:763.04px;font-size:12.00px;line-height:13px;color:#666;letter-spacing:1.742px;z-index:32">06/19</span>
<span class="t" style="left:1204.20px;top:763.04px;font-size:12.00px;line-height:13px;color:#666;letter-spacing:1.742px;z-index:32">06/20</span>
<span class="t" style="left:1311.75px;top:763.04px;font-size:12.00px;line-height:13px;color:#666;letter-spacing:1.742px;z-index:32">06/21</span>
<span class="t" style="left:1419.30px;top:763.04px;font-size:12.00px;line-height:13px;color:#666;letter-spacing:1.742px;z-index:32">06/22</span>
<span class="t" style="left:1526.85px;top:763.04px;font-size:12.00px;line-height:13px;color:#666;letter-spacing:1.742px;z-index:32">06/23</span>
<span class="t" style="left:1634.40px;top:763.04px;font-size:12.00px;line-height:13px;color:#666;letter-spacing:1.742px;z-index:32">06/24</span>
<span class="t" style="left:1741.95px;top:763.04px;font-size:12.00px;line-height:13px;color:#666;letter-spacing:1.742px;z-index:32">06/25</span>
<span class="t" style="left:367.80px;top:837.10px;font-size:13.00px;line-height:14px;color:#7d858d;transform:scaleX(1.1061);transform-origin:0.0px 11.5px;z-index:32">06/12</span>
<span class="t" style="left:582.90px;top:837.10px;font-size:13.00px;line-height:14px;color:#7d858d;transform:scaleX(1.1061);transform-origin:0.0px 11.5px;z-index:32">06/14</span>
<span class="t" style="left:798.00px;top:837.10px;font-size:13.00px;line-height:14px;color:#7d858d;transform:scaleX(1.1061);transform-origin:0.0px 11.5px;z-index:32">06/16</span>
<span class="t" style="left:1013.10px;top:837.10px;font-size:13.00px;line-height:14px;color:#7d858d;transform:scaleX(1.1061);transform-origin:0.0px 11.5px;z-index:32">06/18</span>
<span class="t" style="left:1228.20px;top:837.10px;font-size:13.00px;line-height:14px;color:#7d858d;transform:scaleX(1.1061);transform-origin:0.0px 11.5px;z-index:32">06/20</span>
<span class="t" style="left:1443.30px;top:837.10px;font-size:13.00px;line-height:14px;color:#7d858d;transform:scaleX(1.1061);transform-origin:0.0px 11.5px;z-index:32">06/22</span>
<span class="t" style="left:1658.40px;top:837.10px;font-size:13.00px;line-height:14px;color:#7d858d;transform:scaleX(1.1061);transform-origin:0.0px 11.5px;z-index:32">06/24</span>
<span class="t" style="left:1731.00px;top:637.02px;font-size:13.50px;line-height:14px;color:#222;transform:scaleX(1.0650);transform-origin:0.0px 11.7px;z-index:34">Map Data Time</span>
</body></html>
